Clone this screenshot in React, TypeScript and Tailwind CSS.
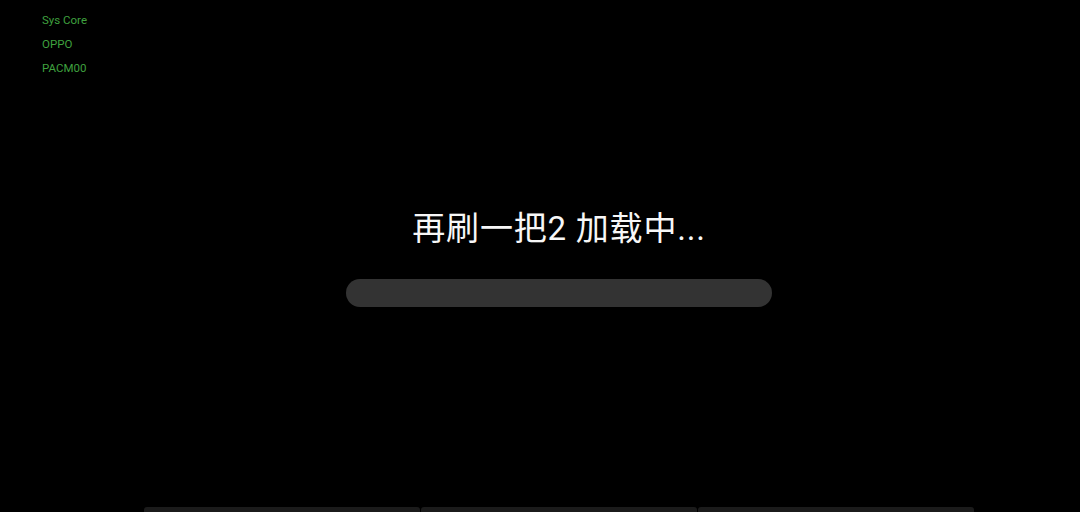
import React from 'react';

const debugLines = ['Sys Core', 'OPPO', 'PACM00'];

const App = () => {
  return (
    <div className="relative h-[512px] w-full overflow-hidden bg-black pl-[38px]">
      {/* Debug overlay */}
      <div className="absolute left-[42px] top-[8px] flex flex-col text-[11.5px] leading-[24px] text-[#3fa13f] [font-family:Roboto,'Noto_Sans',sans-serif]">
        {debugLines.map((line) => (
          <span key={line}>{line}</span>
        ))}
      </div>

      <div className="flex h-full flex-col items-center">
        {/* Loading */}
        <div className="mt-[207px] text-[33px] leading-[44px] tracking-[0.8px] text-[#f7f7f7] [font-family:Roboto,'Noto_Sans_CJK_SC',sans-serif]">
          再刷一把2 加载中...
        </div>
        <div className="mt-[28px] h-[28px] w-[426px] rounded-full bg-[#333333]" />

        {/* Bottom cards peeking */}
        <div className="mt-auto flex w-[831px] gap-[1px]">
          <div className="h-[5px] flex-1 rounded-t-[3px] bg-[#1b1b1b]" />
          <div className="h-[5px] flex-1 rounded-t-[3px] bg-[#1b1b1b]" />
          <div className="h-[5px] flex-1 rounded-t-[3px] bg-[#1b1b1b]" />
        </div>
      </div>
    </div>
  );
};

export default App;
